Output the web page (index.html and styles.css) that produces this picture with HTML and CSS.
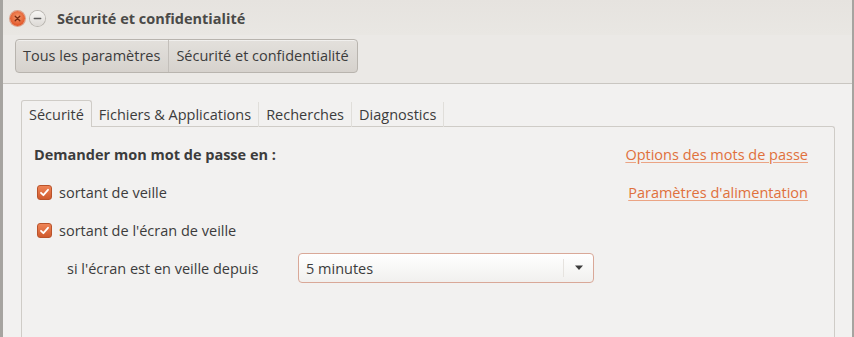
FILE: index.html
```html
<!DOCTYPE html>
<html lang="fr">
<head>
<meta charset="utf-8">
<link rel="stylesheet" href="styles.css">
</head>
<body>
<div class="window">
  <div class="titlebar">
    <span class="wbtn close"><svg width="14" height="14" viewBox="0 0 14 14"><path d="M4.5 4.5 L9.5 9.5 M9.5 4.5 L4.5 9.5" stroke="#7a2a10" stroke-width="1.4" stroke-linecap="round"/></svg></span>
    <span class="wbtn min"><svg width="14" height="14" viewBox="0 0 14 14"><path d="M3.5 7 H10.5" stroke="#5a5a5a" stroke-width="1.4" stroke-linecap="round"/></svg></span>
    <span class="title">Sécurité et confidentialité</span>
  </div>
  <div class="toolbar">
    <div class="crumbs">
      <span class="crumb">Tous les paramètres</span>
      <span class="crumb">Sécurité et confidentialité</span>
    </div>
  </div>
  <div class="content">
    <div class="tabs">
      <span class="tab active">Sécurité</span>
      <span class="tab">Fichiers &amp; Applications</span>
      <span class="tab">Recherches</span>
      <span class="tab">Diagnostics</span>
    </div>
    <div class="pane">
      <div class="row first">
        <span class="heading">Demander mon mot de passe en :</span>
        <a class="link">Options des mots de passe</a>
      </div>
      <div class="row">
        <label class="check"><span class="box"><svg width="11" height="11" viewBox="0 0 11 11"><path d="M2 5.8 L4.4 8.2 L9 2.8" fill="none" stroke="#fff" stroke-width="1.8" stroke-linecap="round" stroke-linejoin="round"/></svg></span>sortant de veille</label>
        <a class="link">Paramètres d'alimentation</a>
      </div>
      <div class="row">
        <label class="check"><span class="box"><svg width="11" height="11" viewBox="0 0 11 11"><path d="M2 5.8 L4.4 8.2 L9 2.8" fill="none" stroke="#fff" stroke-width="1.8" stroke-linecap="round" stroke-linejoin="round"/></svg></span>sortant de l'écran de veille</label>
      </div>
      <div class="row sub">
        <span class="sublabel">si l'écran est en veille depuis</span>
        <div class="combo">
          <span class="combo-text">5 minutes</span>
          <span class="combo-arrow"><svg width="10" height="6" viewBox="0 0 10 6"><path d="M1 0.5 H9 L5 5 Z" fill="#3c3c3c"/></svg></span>
        </div>
      </div>
    </div>
  </div>
</div>
</body>
</html>
```

FILE: styles.css
```css
* { box-sizing: border-box; }
html, body { margin: 0; padding: 0; }
body {
  width: 854px;
  height: 337px;
  overflow: hidden;
  font-family: "Open Sans", "Noto Sans", "DejaVu Sans", sans-serif;
  font-size: 14.5px;
  color: #3c3c3c;
  background: #f2f1f0;
}
.window {
  width: 854px;
  height: 337px;
  border-left: 3px solid #a6a4a0;
  border-right: 2px solid #a6a4a0;
  display: flex;
  flex-direction: column;
  background: #f2f1f0;
  overflow: hidden;
}
.titlebar {
  flex: 0 0 35px;
  display: flex;
  align-items: center;
  padding: 2px 0 0 7px;
  background: linear-gradient(#e6e3df, #e9e7e3);
}
.wbtn {
  width: 15px;
  height: 15px;
  border-radius: 50%;
  display: flex;
  align-items: center;
  justify-content: center;
  margin-right: 5px;
}
.wbtn svg { width: 13px; height: 13px; }
.close {
  background: radial-gradient(circle at 50% 40%, #f59a6e, #e2582a 70%, #c9461d);
  box-shadow: 0 0 0 1px #d9a08a;
}
.min {
  background: linear-gradient(#f7f6f4, #dcd9d5);
  box-shadow: 0 0 0 1px #b9b6b1;
}
.title {
  margin-left: 7px;
  font-weight: bold;
  font-size: 14.5px;
  color: #4a4a48;
}
.toolbar {
  flex: 0 0 49px;
  padding: 4px 0 0 12px;
  background: #ebe9e6;
  border-bottom: 1px solid #c9c6c1;
}
.crumbs {
  display: inline-flex;
  height: 34px;
  border: 1px solid #b8b4ae;
  border-radius: 4px;
  background: linear-gradient(#e3e0dc, #d6d2cd);
  box-shadow: inset 0 1px 0 rgba(255,255,255,0.5);
}
.crumb {
  display: flex;
  align-items: center;
  padding: 0 8px 1px 7px;
  color: #3c3c3c;
}
.crumb + .crumb { border-left: 1px solid #c3bfba; }
.content {
  flex: 1 1 auto;
  min-height: 0;
  display: flex;
  flex-direction: column;
  padding: 16px 17px 0 18px;
}
.tabs {
  flex: 0 0 27px;
  display: flex;
  position: relative;
  z-index: 1;
}
.tab {
  display: flex;
  align-items: center;
  padding: 0 7px 0 7px;
  color: #3c3c3c;
  border-right: 1px solid #e0deda;
  margin-top: 2px;
  height: 25px;
}
.tab.active {
  margin-top: 0;
  height: 27px;
  border: 1px solid #cfccc7;
  border-bottom: none;
  border-radius: 3px 3px 0 0;
  background: #f2f1f0;
  padding: 0 7px;
}
.pane {
  flex: 1 1 auto;
  margin-top: -1px;
  border: 1px solid #cfccc7;
  border-bottom: none;
  border-radius: 0 3px 0 0;
  padding: 16px 26px 0 12px;
}
.row {
  display: flex;
  align-items: center;
  justify-content: space-between;
  height: 38px;
}
.row.first { height: 22px; margin-bottom: 8px; }
.heading { font-weight: bold; color: #3c3c3c; }
.link {
  color: #e0703c;
  text-decoration: underline;
  text-decoration-color: #eba484;
  text-underline-offset: 2px;
}
.check {
  display: flex;
  align-items: center;
  padding-left: 3px;
}
.box {
  width: 15px;
  height: 15px;
  border-radius: 3px;
  background: linear-gradient(#ef8456, #cf5a2e);
  border: 1px solid #b9532b;
  display: flex;
  align-items: center;
  justify-content: center;
  margin-right: 7px;
}
.sub {
  justify-content: flex-start;
  padding-left: 33px;
}
.sublabel { width: 231px; }
.combo {
  width: 296px;
  height: 30px;
  border: 1px solid #d9a898;
  border-radius: 4px;
  background: linear-gradient(#ffffff, #f1f0ee);
  display: flex;
  align-items: center;
  justify-content: space-between;
  padding-left: 7px;
}
.combo-arrow {
  width: 30px;
  height: 18px;
  border-left: 1px solid #e6e3df;
  display: flex;
  align-items: center;
  justify-content: center;
}
```
